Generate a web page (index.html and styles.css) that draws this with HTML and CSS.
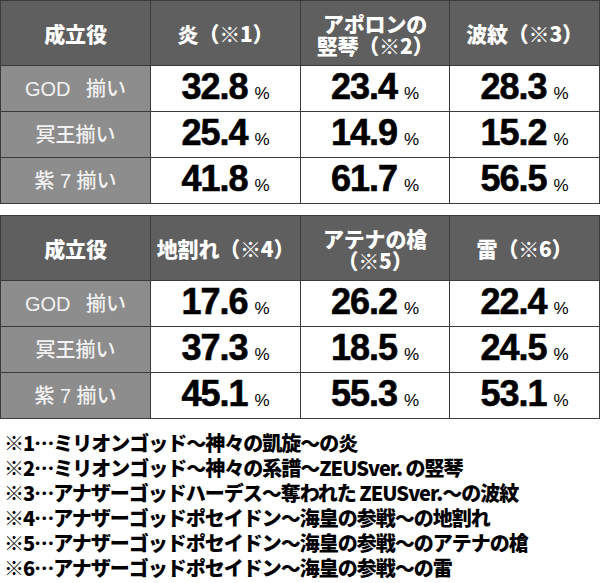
FILE: index.html
```html
<!DOCTYPE html>
<html lang="ja">
<head>
<meta charset="utf-8">
<link rel="stylesheet" href="styles.css">
</head>
<body>
<div class="page">
  <table class="rate">
    <colgroup><col class="c1"><col class="c2"><col class="c3"><col class="c4"></colgroup>
    <tr class="head">
      <th>成立役</th>
      <th>炎（※1）</th>
      <th class="two">アポロンの<br>竪琴（※2）</th>
      <th>波紋（※3）</th>
    </tr>
    <tr>
      <th class="role wide">GOD 揃い</th>
      <td><span class="num">32.8</span><span class="pct">%</span></td>
      <td><span class="num">23.4</span><span class="pct">%</span></td>
      <td><span class="num">28.3</span><span class="pct">%</span></td>
    </tr>
    <tr>
      <th class="role">冥王揃い</th>
      <td><span class="num">25.4</span><span class="pct">%</span></td>
      <td><span class="num">14.9</span><span class="pct">%</span></td>
      <td><span class="num">15.2</span><span class="pct">%</span></td>
    </tr>
    <tr>
      <th class="role">紫 7 揃い</th>
      <td><span class="num">41.8</span><span class="pct">%</span></td>
      <td><span class="num">61.7</span><span class="pct">%</span></td>
      <td><span class="num">56.5</span><span class="pct">%</span></td>
    </tr>
  </table>

  <table class="rate">
    <colgroup><col class="c1"><col class="c2"><col class="c3"><col class="c4"></colgroup>
    <tr class="head">
      <th>成立役</th>
      <th>地割れ（※4）</th>
      <th class="two">アテナの槍<br>（※5）</th>
      <th>雷（※6）</th>
    </tr>
    <tr>
      <th class="role wide">GOD 揃い</th>
      <td><span class="num">17.6</span><span class="pct">%</span></td>
      <td><span class="num">26.2</span><span class="pct">%</span></td>
      <td><span class="num">22.4</span><span class="pct">%</span></td>
    </tr>
    <tr>
      <th class="role">冥王揃い</th>
      <td><span class="num">37.3</span><span class="pct">%</span></td>
      <td><span class="num">18.5</span><span class="pct">%</span></td>
      <td><span class="num">24.5</span><span class="pct">%</span></td>
    </tr>
    <tr>
      <th class="role">紫 7 揃い</th>
      <td><span class="num">45.1</span><span class="pct">%</span></td>
      <td><span class="num">55.3</span><span class="pct">%</span></td>
      <td><span class="num">53.1</span><span class="pct">%</span></td>
    </tr>
  </table>

  <ul class="notes">
    <li>※1…ミリオンゴッド〜神々の凱旋〜の炎</li>
    <li>※2…ミリオンゴッド〜神々の系譜〜ZEUSver. の竪琴</li>
    <li>※3…アナザーゴッドハーデス〜奪われた ZEUSver.〜の波紋</li>
    <li>※4…アナザーゴッドポセイドン〜海皇の参戦〜の地割れ</li>
    <li>※5…アナザーゴッドポセイドン〜海皇の参戦〜のアテナの槍</li>
    <li>※6…アナザーゴッドポセイドン〜海皇の参戦〜の雷</li>
  </ul>
</div>
</body>
</html>
```

FILE: styles.css
```css
html, body {
  margin: 0;
  padding: 0;
  background: #ffffff;
}

.page {
  width: 600px;
  display: flex;
  flex-direction: column;
  gap: 11px;
  font-family: "Liberation Sans", "Noto Sans CJK JP", sans-serif;
}

.rate {
  border-collapse: collapse;
  table-layout: fixed;
  width: 599px;
}

.c1 { width: 150px; }
.c2 { width: 150px; }
.c3 { width: 149px; }
.c4 { width: 150px; }

.rate th,
.rate td {
  border: 1px solid #3a3a3a;
  padding: 0;
  text-align: center;
  vertical-align: middle;
  line-height: 20px;
}

.head th {
  height: 63px;
  background: #5f5f5f;
  color: #ffffff;
  font-family: "Noto Sans CJK JP", sans-serif;
  font-weight: 900;
  font-size: 21px;
  line-height: 25px;
  letter-spacing: -0.2px;
}

.head th.two {
  line-height: 22px;
  padding-top: 1px;
}

.rate tr:not(.head) th,
.rate tr:not(.head) td {
  height: 46px;
  box-sizing: border-box;
}

.role {
  background: #8d8d8d;
  color: #f2f2f2;
  font-weight: 500;
  font-size: 20px;
  letter-spacing: 0;
}

.role.wide {
  word-spacing: 10px;
}

.rate td {
  background: #ffffff;
  color: #000000;
  padding-top: 4px;
}

.num {
  font-family: "Liberation Sans", Arial, sans-serif;
  font-weight: 700;
  font-size: 36px;
  line-height: 20px;
  letter-spacing: -1px;
  -webkit-text-stroke: 0.6px #000000;
}

.pct {
  font-family: "Liberation Sans", Arial, sans-serif;
  font-weight: 400;
  font-size: 17px;
  line-height: 20px;
  margin-left: 7px;
}

.notes {
  list-style: none;
  margin: 0;
  padding: 0 0 0 4px;
  color: #000000;
  font-family: "Noto Sans CJK JP", sans-serif;
  font-weight: 900;
  font-size: 20px;
  line-height: 25px;
  letter-spacing: -1px;
}
```
